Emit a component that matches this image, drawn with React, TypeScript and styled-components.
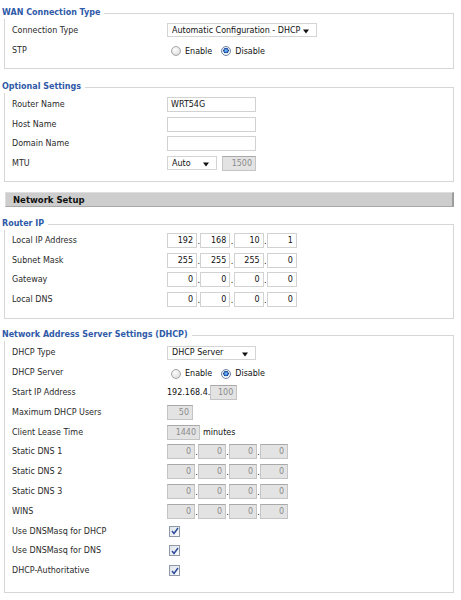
import React from 'react';
import styled, { createGlobalStyle } from 'styled-components';

const GlobalStyle = createGlobalStyle`
  body {
    margin: 0;
    background: #ffffff;
    font-family: "DejaVu Sans", Verdana, sans-serif;
    font-size: 8px;
    color: #2a2a2a;
  }
`;

const Page = styled.div`
  width: 461px;
  padding: 7px 0 0 4px;
  box-sizing: border-box;
`;

const Fieldset = styled.fieldset<{ $row: number; $gap: number; $pt: number; $pb: number }>`
  --row: ${(p) => p.$row}px;
  width: 450px;
  box-sizing: border-box;
  margin: ${(p) => p.$gap}px 0 0 0;
  padding: ${(p) => p.$pt}px 7px ${(p) => p.$pb}px 7px;
  border: 1px solid #d6d6d6;
  min-width: 0;
`;

const Legend = styled.legend`
  margin-left: -10px;
  padding: 0 4px 0 0;
  font-weight: bold;
  line-height: 12px;
  color: #2f5aa8;
`;

const SectionBar = styled.div`
  margin: 10px 0 0 1px;
  width: 449px;
  height: 15px;
  box-sizing: border-box;
  padding-left: 7px;
  display: flex;
  align-items: center;
  background: #cdcdcd;
  border-top: 1px solid #dedede;
  border-left: 1px solid #dedede;
  border-right: 2px solid #9d9d9d;
  border-bottom: 1px solid #a8a8a8;
  font-weight: bold;
  font-size: 8.5px;
  color: #111;
`;

const Row = styled.div`
  height: var(--row);
  display: grid;
  grid-template-columns: 155px 1fr;
  align-items: center;
`;

const Label = styled.span`
  color: #2a2a2a;
`;

const Controls = styled.div`
  display: flex;
  align-items: center;
`;

const SelectBox = styled.div<{ $w: number }>`
  width: ${(p) => p.$w}px;
  height: 14px;
  box-sizing: border-box;
  border: 1px solid #d4d4d4;
  background: #fff;
  display: flex;
  align-items: center;
  justify-content: space-between;
  padding: 0 7px 0 4px;
  color: #111;
`;

const Caret = () => (
  <svg width="6" height="5" viewBox="0 0 6 5" style={{ marginTop: 3 }}>
    <path d="M0 0.5 H6 L3 4.5 Z" fill="#111" />
  </svg>
);

const TextInput = styled.div<{ $w: number; $disabled?: boolean; $right?: boolean }>`
  width: ${(p) => p.$w}px;
  height: 15px;
  box-sizing: border-box;
  border: 1px solid ${(p) => (p.$disabled ? '#c4c4c4' : '#d2d2d2')};
  border-top-color: ${(p) => (p.$disabled ? '#a9a9a9' : '#d2d2d2')};
  background: ${(p) => (p.$disabled ? '#e3e3e3' : '#fff')};
  color: ${(p) => (p.$disabled ? '#8c8c8c' : '#111')};
  display: flex;
  align-items: center;
  justify-content: ${(p) => (p.$right ? 'flex-end' : 'flex-start')};
  padding: 0 3px;
`;

const Dot = styled.span<{ $w: number }>`
  width: ${(p) => p.$w}px;
  align-self: flex-end;
  line-height: 12px;
  text-align: center;
  color: #111;
`;

const RadioDot = styled.span<{ $on?: boolean }>`
  width: 10px;
  height: 10px;
  box-sizing: border-box;
  border-radius: 50%;
  border: 1px solid ${(p) => (p.$on ? '#6f86a6' : '#a7a7a7')};
  background: ${(p) =>
    p.$on
      ? 'radial-gradient(circle at 50% 45%, #9fd0ff 0, #2f78d0 28%, #16408c 42%, #e9ecf0 48%, #ffffff 100%)'
      : 'radial-gradient(circle at 40% 35%, #ffffff 0, #e4e4e4 60%, #cfcfcf 100%)'};
  margin-right: 4px;
`;

const RadioLabel = styled.label`
  display: flex;
  align-items: center;
  margin-right: 9px;
  padding-top: 2px;
  color: #111;
`;

const CheckBox = styled.span`
  width: 11px;
  height: 11px;
  box-sizing: border-box;
  margin-left: 2px;
  border: 1px solid #8e99a8;
  background: linear-gradient(135deg, #dfe3ea, #fbfbfc);
  display: flex;
  align-items: center;
  justify-content: center;
`;

const Check = () => (
  <svg width="8" height="8" viewBox="0 0 8 8">
    <path d="M1 4 L3 6.5 L7 1" stroke="#2d4d9c" strokeWidth="1.5" fill="none" />
  </svg>
);

const Plain = styled.span<{ $ml?: number }>`
  margin-left: ${(p) => p.$ml ?? 0}px;
  color: #111;
`;

function Radios({ on }: { on: 'enable' | 'disable' }) {
  return (
    <Controls>
      <RadioLabel style={{ marginLeft: 4 }}>
        <RadioDot $on={on === 'enable'} />
        Enable
      </RadioLabel>
      <RadioLabel>
        <RadioDot $on={on === 'disable'} />
        Disable
      </RadioLabel>
    </Controls>
  );
}

function IpField({ values, disabled }: { values: string[]; disabled?: boolean }) {
  const w = disabled ? 28 : 30;
  const dw = disabled ? 3 : 3.3;
  return (
    <Controls>
      {values.map((v, i) => (
        <React.Fragment key={i}>
          <TextInput $w={w} $disabled={disabled} $right>
            {v}
          </TextInput>
          {i < values.length - 1 && <Dot $w={dw}>.</Dot>}
        </React.Fragment>
      ))}
    </Controls>
  );
}

function Checked() {
  return (
    <Controls>
      <CheckBox>
        <Check />
      </CheckBox>
    </Controls>
  );
}

export default function App() {
  const zeros = ['0', '0', '0', '0'];
  return (
    <Page>
      <GlobalStyle />
      <Fieldset $row={20} $gap={0} $pt={1} $pb={8}>
        <Legend>WAN Connection Type</Legend>
        <Row>
          <Label>Connection Type</Label>
          <Controls>
            <SelectBox $w={150}>
              Automatic Configuration - DHCP
              <Caret />
            </SelectBox>
          </Controls>
        </Row>
        <Row>
          <Label>STP</Label>
          <Radios on='disable' />
        </Row>
      </Fieldset>

      <Fieldset $row={19.5} $gap={12} $pt={2} $pb={8}>
        <Legend>Optional Settings</Legend>
        <Row>
          <Label>Router Name</Label>
          <Controls>
            <TextInput $w={89}>WRT54G</TextInput>
          </Controls>
        </Row>
        <Row>
          <Label>Host Name</Label>
          <Controls>
            <TextInput $w={89} />
          </Controls>
        </Row>
        <Row>
          <Label>Domain Name</Label>
          <Controls>
            <TextInput $w={89} />
          </Controls>
        </Row>
        <Row>
          <Label>MTU</Label>
          <Controls>
            <SelectBox $w={50}>
              Auto
              <Caret />
            </SelectBox>
            <TextInput $w={34} $disabled $right style={{ marginLeft: 5 }}>
              1500
            </TextInput>
          </Controls>
        </Row>
      </Fieldset>

      <SectionBar>Network Setup</SectionBar>

      <Fieldset $row={19.5} $gap={11} $pt={1} $pb={9}>
        <Legend>Router IP</Legend>
        <Row>
          <Label>Local IP Address</Label>
          <IpField values={['192', '168', '10', '1']} />
        </Row>
        <Row>
          <Label>Subnet Mask</Label>
          <IpField values={['255', '255', '255', '0']} />
        </Row>
        <Row>
          <Label>Gateway</Label>
          <IpField values={zeros} />
        </Row>
        <Row>
          <Label>Local DNS</Label>
          <IpField values={zeros} />
        </Row>
      </Fieldset>

      <Fieldset $row={19.8} $gap={10} $pt={2} $pb={11}>
        <Legend>Network Address Server Settings (DHCP)</Legend>
        <Row>
          <Label>DHCP Type</Label>
          <Controls>
            <SelectBox $w={89}>
              DHCP Server
              <Caret />
            </SelectBox>
          </Controls>
        </Row>
        <Row>
          <Label>DHCP Server</Label>
          <Radios on='disable' />
        </Row>
        <Row>
          <Label>Start IP Address</Label>
          <Controls>
            <Plain>192.168.4.</Plain>
            <TextInput $w={27} $disabled $right>
              100
            </TextInput>
          </Controls>
        </Row>
        <Row>
          <Label>Maximum DHCP Users</Label>
          <Controls>
            <TextInput $w={26} $disabled $right>
              50
            </TextInput>
          </Controls>
        </Row>
        <Row>
          <Label>Client Lease Time</Label>
          <Controls>
            <TextInput $w={33} $disabled $right>
              1440
            </TextInput>
            <Plain $ml={3}>minutes</Plain>
          </Controls>
        </Row>
        <Row>
          <Label>Static DNS 1</Label>
          <IpField values={zeros} disabled />
        </Row>
        <Row>
          <Label>Static DNS 2</Label>
          <IpField values={zeros} disabled />
        </Row>
        <Row>
          <Label>Static DNS 3</Label>
          <IpField values={zeros} disabled />
        </Row>
        <Row>
          <Label>WINS</Label>
          <IpField values={zeros} disabled />
        </Row>
        <Row>
          <Label>Use DNSMasq for DHCP</Label>
          <Checked />
        </Row>
        <Row>
          <Label>Use DNSMasq for DNS</Label>
          <Checked />
        </Row>
        <Row>
          <Label>DHCP-Authoritative</Label>
          <Checked />
        </Row>
      </Fieldset>
    </Page>
  );
}
